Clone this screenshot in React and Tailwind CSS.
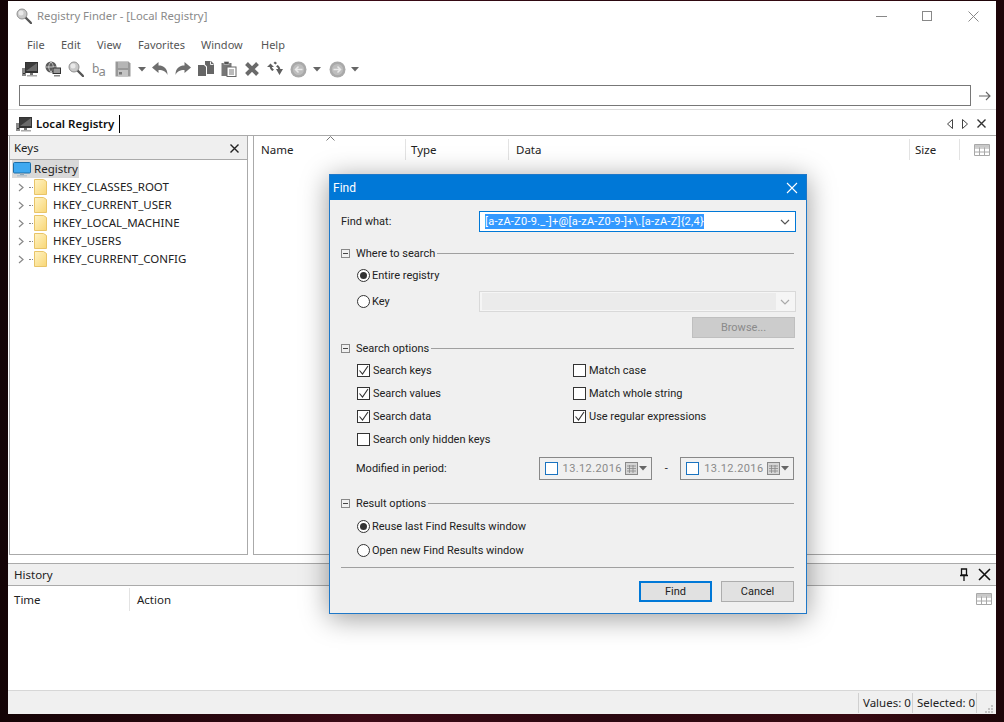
import React from 'react';

const Caret = () => (
  <svg width="8" height="5" viewBox="0 0 8 5"><path d="M0 0h8L4 4.500z" fill="#666" /></svg>
);

const Computer = ({ size = 16 }) => (
  <svg width={size} height={size} viewBox="0 0 16 16">
    <rect x="0" y="7" width="4" height="8" fill="#8a8a8a" />
    <rect x="1" y="12" width="2" height="1" fill="#333" />
    <rect x="3" y="1" width="13" height="11" fill="#333" />
    <rect x="4" y="2" width="11" height="8" fill="#6a6a6a" />
    <path d="M4 2h11L4 10z" fill="#3c3c3c" />
    <rect x="8" y="12" width="3" height="2" fill="#777" />
    <rect x="5" y="14" width="10" height="1.500" fill="#aaa" />
  </svg>
);

const GlobePc = () => (
  <svg width="16" height="16" viewBox="0 0 16 16">
    <circle cx="6" cy="6" r="5.500" fill="#5a5a5a" />
    <path d="M1 6h10M6 1c-3 3-3 7 0 10M6 1c3 3 3 7 0 10" stroke="#ddd" strokeWidth="0.800" fill="none" />
    <rect x="7.500" y="6.500" width="8.500" height="6.500" fill="#333" />
    <rect x="8.500" y="7.500" width="6.500" height="4.500" fill="#9a9a9a" />
    <rect x="9" y="14" width="6" height="1.500" fill="#888" />
  </svg>
);

const Magnifier = ({ size = 16 }) => (
  <svg width={size} height={size} viewBox="0 0 16 16">
    <path d="M9 9l6 6" stroke="#555" strokeWidth="2.400" strokeLinecap="round" />
    <circle cx="6" cy="6" r="5" fill="#c9c9c9" stroke="#8f8f8f" />
    <circle cx="5" cy="5" r="2.500" fill="#e9e9e9" />
  </svg>
);

const Floppy = () => (
  <svg width="16" height="16" viewBox="0 0 16 16">
    <path d="M0.500 0.500h13l2 2v13h-15z" fill="#999" />
    <rect x="3" y="1" width="10" height="6" fill="#b5b5b5" />
    <rect x="3" y="9" width="10" height="6.500" fill="#c4c4c4" />
    <rect x="4" y="11" width="3" height="2.500" fill="#777" />
  </svg>
);

const Undo = ({ flip }) => (
  <svg width="16" height="14" viewBox="0 0 16 14" className={flip ? '-scale-x-100' : ''}>
    <path d="M0 5.500L6.500 0v3.500c5 0 9 2.500 9 9.500-1.500-3.500-4-5-9-5V11z" fill="#6f6f6f" />
  </svg>
);

const CopyIcon = () => (
  <svg width="16" height="16" viewBox="0 0 16 16">
    <path d="M0 4h6l2 2v9H0z" fill="#666" />
    <path d="M7 0h6l3 3v10H9V5.500L7 3.500z" fill="#666" />
    <path d="M12.500 0.500v3h3" fill="none" stroke="#eee" />
  </svg>
);

const PasteIcon = () => (
  <svg width="16" height="16" viewBox="0 0 16 16">
    <rect x="0.500" y="2" width="10" height="13" fill="#777" />
    <rect x="3" y="0.500" width="5" height="3" fill="#555" stroke="#eee" strokeWidth="0.500" />
    <rect x="6" y="6" width="9" height="9.500" fill="#fff" stroke="#666" />
    <path d="M8 9h5M8 11h5M8 13h5" stroke="#777" />
  </svg>
);

const BigX = () => (
  <svg width="16" height="16" viewBox="0 0 16 16">
    <path d="M2.500 2.500l11 11M13.500 2.500l-11 11" stroke="#6a6a6a" strokeWidth="4" />
  </svg>
);

const SwapArrows = () => (
  <svg width="16" height="16" viewBox="0 0 16 16">
    <path d="M0 6l3.500-3.500L7 6H4.800c.3 1 1 1.800 2.200 2.400L5.500 10C3.800 9 3 7.700 2.700 6z" fill="#5f5f5f" />
    <path d="M8 0.500l2 1.500-1.500 1.500L6.500 2z" fill="#5f5f5f" />
    <path d="M16 8l-3.500 6L9 8h2.200c-.3-1-1-1.800-2.200-2.400L10.500 4c1.700 1 2.500 2.300 2.800 4z" fill="#5f5f5f" />
  </svg>
);

const CircleArrow = ({ flip }) => (
  <svg width="17" height="17" viewBox="0 0 17 17" className={flip ? '-scale-x-100' : ''}>
    <circle cx="8.500" cy="8.500" r="8" fill="#a9a9a9" />
    <circle cx="8.500" cy="8.500" r="5.500" fill="#bdbdbd" />
    <path d="M12.500 8.500h-7M8.500 5.500l-3 3 3 3" stroke="#e9e9e9" strokeWidth="1.500" fill="none" />
  </svg>
);

const GridIcon = () => (
  <svg width="16" height="12" viewBox="0 0 16 12" className="shrink-0">
    <path d="M0.500 0.500h15v11h-15zM0.500 4h15M0.500 8h15M5.500 0.500v11M10.500 0.500v11" fill="none" stroke="#a8a8a8" />
    <rect x="1" y="1" width="14" height="2.500" fill="#c9c9c9" />
  </svg>
);

const Folder = () => (
  <svg width="13" height="16" viewBox="0 0 13 16" className="shrink-0">
    <defs>
      <linearGradient id="fld" x1="0" y1="0" x2="1" y2="1">
        <stop offset="0" stopColor="#fff3c4" />
        <stop offset="1" stopColor="#f8d675" />
      </linearGradient>
    </defs>
    <path d="M0.500 0.500h9l3 2v13h-12z" fill="url(#fld)" stroke="#e8c468" />
  </svg>
);

const PcBlue = () => (
  <svg width="18" height="15" viewBox="0 0 18 15" className="shrink-0">
    <rect x="0.500" y="0.500" width="17" height="10.500" rx="1" fill="#3fa9f0" stroke="#1c6ea8" />
    <rect x="7" y="11" width="4" height="2" fill="#8fa7b8" />
    <rect x="4" y="13" width="10" height="1.500" fill="#b6c4ce" />
  </svg>
);

const Chevron = ({ color = '#555' }) => (
  <svg width="10" height="6" viewBox="0 0 10 6"><path d="M1 1l4 4 4-4" fill="none" stroke={color} strokeWidth="1.200" /></svg>
);

const Check = () => (
  <svg width="11" height="11" viewBox="0 0 11 11"><path d="M1.500 5.500l3 3.500 5.500-8" fill="none" stroke="#333" strokeWidth="1.100" /></svg>
);

const CheckBox = ({ checked, label }) => (
  <div className="flex items-center gap-[3px] h-[13px]">
    <span className="w-[13px] h-[13px] border border-[#333] bg-white flex items-center justify-center shrink-0">
      {checked && <Check />}
    </span>
    <span>{label}</span>
  </div>
);

const Radio = ({ checked, label }) => (
  <div className="flex items-center gap-[2px] h-[13px]">
    <span className="w-[13px] h-[13px] rounded-full border border-[#333] bg-white flex items-center justify-center shrink-0">
      {checked && <span className="w-[7px] h-[7px] rounded-full bg-[#333]" />}
    </span>
    <span>{label}</span>
  </div>
);

const GroupHeader = ({ label }) => (
  <div className="flex items-center h-[14px]">
    <span className="w-[9px] h-[9px] border border-[#888] flex items-center justify-center shrink-0">
      <span className="w-[5px] h-px bg-[#444]" />
    </span>
    <span className="ml-[6px] mr-[2px] whitespace-nowrap">{label}</span>
    <span className="flex-1 h-px bg-[#a0a0a0]" />
  </div>
);

const DateBox = () => (
  <div className="w-[114px] h-[23px] border border-[#888] flex items-center pl-[5px] pr-[4px]">
    <span className="w-[13px] h-[13px] border border-[#1a73c0] bg-white shrink-0" />
    <span className="ml-[5px] text-[#8a8a8a] tracking-[0.4px]">13.12.2016</span>
    <svg width="13" height="13" viewBox="0 0 13 13" className="ml-auto">
      <rect x="0.500" y="0.500" width="12" height="12" fill="#d5d5d5" stroke="#888" />
      <path d="M2 4h9M2 6.500h9M2 9h9M4.500 3v8M8 3v8" stroke="#888" strokeWidth="0.800" />
    </svg>
    <span className="ml-[1px]"><Caret /></span>
  </div>
);

const treeRoots = [
  'HKEY_CLASSES_ROOT',
  'HKEY_CURRENT_USER',
  'HKEY_LOCAL_MACHINE',
  'HKEY_USERS',
  'HKEY_CURRENT_CONFIG',
];

const menus = [
  { name: 'File', w: 'w-[34px]' },
  { name: 'Edit', w: 'w-[36px]' },
  { name: 'View', w: 'w-[41px]' },
  { name: 'Favorites', w: 'w-[63px]' },
  { name: 'Window', w: 'w-[60px]' },
  { name: 'Help', w: 'w-[30px]' },
];

const FindDialog = () => (
  <div className="absolute left-[329px] top-[174px] w-[478px] h-[440px] bg-[#f0f0f0] border border-[#1f78c8] shadow-[0_4px_26px_rgba(0,0,0,0.4)] flex flex-col text-[#222] font-['Roboto',sans-serif] text-[11px]">
    <div className="h-[25px] bg-[#0078d7] text-white flex items-center justify-between pl-[3px] pr-[8px] text-[12px] shrink-0">
      <span>Find</span>
      <svg width="12" height="12" viewBox="0 0 12 12"><path d="M1 1l10 10M11 1L1 11" stroke="#fff" strokeWidth="1.100" /></svg>
    </div>

    <div className="flex-1 pl-[11px] pr-[12px] pt-[11px] flex flex-col">
      <div className="flex items-center h-[21px]">
        <span className="w-[138px]">Find what:</span>
        <div className="w-[317px] h-[21px] -mr-[2px] bg-white border border-[#0078d7] flex items-center pl-[5px] pr-[5px]">
          <span className="bg-[#3399ff] text-white whitespace-nowrap leading-[15px] tracking-[0.25px]">[a-zA-Z0-9._-]+@[a-zA-Z0-9-]+\.[a-zA-Z]{'{2,4}'}</span>
          <span className="ml-auto"><Chevron /></span>
        </div>
      </div>

      <div className="mt-[14px]"><GroupHeader label="Where to search" /></div>
      <div className="mt-[9px] ml-[16px]"><Radio checked label="Entire registry" /></div>
      <div className="mt-[9px] ml-[16px] flex items-center h-[21px]">
        <span className="w-[122px]"><Radio label="Key" /></span>
        <div className="w-[317px] h-[21px] -mr-[2px] bg-[#f5f5f5] border border-[#d9d9d9] flex items-center pl-[2px]">
          <span className="w-[294px] h-[17px] bg-[#ebebeb]" />
          <span className="ml-[4px]"><Chevron color="#aaa" /></span>
        </div>
      </div>
      <div className="mt-[5px] flex justify-end h-[22px]">
        <div className="w-[103px] h-[21px] -mr-[1px] bg-[#cccccc] border border-[#bfbfbf] flex items-center justify-center text-[#8a8a8a]">Browse...</div>
      </div>

      <div className="mt-[2px]"><GroupHeader label="Search options" /></div>
      <div className="mt-[9px] ml-[16px] grid grid-cols-[216px_1fr] gap-y-[10px]">
        <CheckBox checked label="Search keys" />
        <CheckBox label="Match case" />
        <CheckBox checked label="Search values" />
        <CheckBox label="Match whole string" />
        <CheckBox checked label="Search data" />
        <CheckBox checked label="Use regular expressions" />
        <CheckBox label="Search only hidden keys" />
      </div>
      <div className="mt-[11px] ml-[15px] flex items-center h-[23px]">
        <span className="w-[183px]">Modified in period:</span>
        <DateBox />
        <span className="w-[28px] text-center">-</span>
        <DateBox />
      </div>

      <div className="mt-[16px]"><GroupHeader label="Result options" /></div>
      <div className="mt-[10px] ml-[16px]"><Radio checked label="Reuse last Find Results window" /></div>
      <div className="mt-[11px] ml-[16px]"><Radio label="Open new Find Results window" /></div>
      <div className="mt-[10px] h-px bg-[#a0a0a0]" />
      <div className="mt-[13px] flex justify-end gap-[9px]">
        <button className="w-[73px] h-[21px] bg-[#e1e1e1] border-2 border-[#0078d7]">Find</button>
        <button className="w-[73px] h-[21px] bg-[#e1e1e1] border border-[#adadad]">Cancel</button>
      </div>
    </div>
  </div>
);

export default function App() {
  return (
    <div className="relative w-[1004px] h-[722px] overflow-hidden bg-[linear-gradient(90deg,#140406,#2c0810_25%,#3c0a16_36%,#2a0810_60%,#380a12_85%,#1c0508)] pt-px pl-[8px] font-['Noto_Sans','Open_Sans',sans-serif] text-[11.5px] leading-none">
      <div className="w-[988px] h-[713px] bg-white flex flex-col text-[#333]">
        {/* title bar */}
        <div className="h-[30px] flex items-center pl-[8px] shrink-0">
          <Magnifier />
          <span className="ml-[5px] text-[#8a8a8a] text-[11.3px]">Registry Finder - [Local Registry]</span>
          <div className="ml-auto flex items-center">
            <span className="w-[11px] h-px bg-[#888] mr-[35px]" />
            <span className="w-[10px] h-[10px] border border-[#888] mr-[36px]" />
            <svg width="11" height="11" viewBox="0 0 11 11" className="mr-[17px]"><path d="M0.500 0.500l10 10M10.500 0.500l-10 10" stroke="#888" /></svg>
          </div>
        </div>

        {/* menu + toolbar */}
        <div className="h-[24px] flex items-center pl-[19px] mt-[1px] shrink-0 text-[#555] text-[11px]">
          {menus.map((m) => (
            <span key={m.name} className={m.w}>{m.name}</span>
          ))}
        </div>
        <div className="h-[26px] flex items-center pl-[14px] shrink-0">
          <span className="w-[23px]"><Computer /></span>
          <span className="w-[23px]"><GlobePc /></span>
          <span className="w-[24px]"><Magnifier /></span>
          <span className="w-[23px] text-[#888] text-[12px] tracking-[-1px]">b<sub className="text-[13px]">a</sub></span>
          <span className="w-[23px]"><Floppy /></span>
          <span className="w-[14px]"><Caret /></span>
          <span className="w-[23px]"><Undo /></span>
          <span className="w-[23px]"><Undo flip /></span>
          <span className="w-[23px]"><CopyIcon /></span>
          <span className="w-[23px]"><PasteIcon /></span>
          <span className="w-[23px]"><BigX /></span>
          <span className="w-[23px]"><SwapArrows /></span>
          <span className="w-[23px]"><CircleArrow /></span>
          <span className="w-[16px]"><Caret /></span>
          <span className="w-[22px]"><CircleArrow flip /></span>
          <span className="w-[14px]"><Caret /></span>
        </div>
        <div className="h-[21px] flex items-center mt-[3px] pl-[11px] shrink-0">
          <div className="w-[952px] h-[21px] border border-[#777] bg-white" />
          <svg width="12" height="10" viewBox="0 0 12 10" className="ml-[8px]"><path d="M0 5h11M7 1l4 4-4 4" fill="none" stroke="#666" strokeWidth="1.100" /></svg>
        </div>

        {/* tabs */}
        <div className="h-[26px] mt-[3px] border-t border-[#ddd] flex items-center pl-[8px] pr-[10px] pt-[2px] shrink-0">
          <Computer />
          <span className="ml-[4px] font-semibold text-[#111] whitespace-nowrap">Local Registry</span>
          <span className="ml-[5px] w-px h-[18px] bg-black" />
          <div className="ml-auto flex items-center gap-[9px]">
            <svg width="6" height="10" viewBox="0 0 6 10"><path d="M5.500 0.500v9l-5-4.500z" fill="none" stroke="#444" /></svg>
            <svg width="6" height="10" viewBox="0 0 6 10"><path d="M0.500 0.500v9l5-4.500z" fill="none" stroke="#444" /></svg>
            <svg width="9" height="9" viewBox="0 0 9 9"><path d="M0.500 0.500l8 8M8.500 0.500l-8 8" stroke="#333" strokeWidth="1.400" /></svg>
          </div>
        </div>

        {/* keys + values */}
        <div className="h-[420px] flex shrink-0 border-t border-[#aaa]">
          <div className="w-[239px] ml-px border-l border-r border-b border-[#aaa] flex flex-col">
            <div className="h-[24px] bg-[#efefef] border-b border-[#aaa] flex items-center justify-between pl-[4px] pr-[8px] pt-[1px] text-[#222] shrink-0">
              <span>Keys</span>
              <svg width="9" height="9" viewBox="0 0 9 9"><path d="M0.500 0.500l8 8M8.500 0.500l-8 8" stroke="#222" strokeWidth="1.400" /></svg>
            </div>
            <div className="text-[#222]">
              <div className="flex items-center h-[18px] ml-[2px] w-[67px] bg-[#d9d9d9] pl-[1px]">
                <PcBlue />
                <span className="ml-[3px]">Registry</span>
              </div>
              {treeRoots.map((k) => (
                <div key={k} className="flex items-center h-[18px]">
                  <svg width="6" height="9" viewBox="0 0 6 9" className="ml-[8px]"><path d="M1 1l4 3.500-4 3.500" fill="none" stroke="#888" strokeWidth="1.200" /></svg>
                  <span className="ml-[5px] w-[4px] h-px border-t border-dotted border-[#888]" />
                  <span className="ml-[1px]"><Folder /></span>
                  <span className="ml-[6px]">{k}</span>
                </div>
              ))}
            </div>
          </div>

          <div className="w-[743px] ml-[5px] border-l border-b border-[#aaa] text-[#222]">
            <div className="relative h-[24px] flex items-center pt-[3px]">
              <span className="w-[151px] pl-[7px]">Name</span>
              <span className="w-[103px] pl-[5px] h-[21px] flex items-center border-l border-[#e3e3e3]">Type</span>
              <span className="w-[401px] pl-[7px] h-[21px] flex items-center border-l border-[#e3e3e3]">Data</span>
              <span className="w-[50px] pl-[5px] h-[21px] flex items-center border-l border-[#e3e3e3]">Size</span>
              <span className="pl-[14px] h-[21px] flex items-center border-l border-[#e3e3e3]"><GridIcon /></span>
              <svg width="9" height="5" viewBox="0 0 9 5" className="absolute left-[72px] top-0"><path d="M0.500 4.500l4-4 4 4" fill="none" stroke="#777" /></svg>
            </div>
          </div>
        </div>

        {/* history */}
        <div className="h-[8px] shrink-0" />
        <div className="h-[23px] bg-[#efefef] border-t border-b border-[#aaa] flex items-center pl-[6px] pr-[5px] text-[#222] shrink-0">
          <span>History</span>
          <svg width="8" height="13" viewBox="0 0 8 13" className="ml-auto mr-[10px]"><path d="M1.500 1h5v6h-5zM0 7.500h8M4 8v5" fill="none" stroke="#111" strokeWidth="1.300" /></svg>
          <svg width="13" height="13" viewBox="0 0 13 13"><path d="M1 1l11 11M12 1L1 12" stroke="#111" strokeWidth="1.600" /></svg>
        </div>
        <div className="flex-1 flex items-start text-[#222] pr-[4px] pt-[2px]">
          <span className="w-[122px] h-[23px] pl-[6px] flex items-center border-r border-[#e3e3e3]">Time</span>
          <span className="pl-[7px] h-[23px] flex items-center">Action</span>
          <span className="ml-auto mt-[5px]"><GridIcon /></span>
        </div>

        {/* status bar */}
        <div className="h-[24px] bg-[#f0f0f0] border-t border-[#d7d7d7] flex items-center justify-end text-[#222] shrink-0">
          <span className="h-[20px] w-[54px] pl-[4px] flex items-center border-l border-[#d0d0d0] whitespace-nowrap">Values: 0</span>
          <span className="h-[20px] w-[64px] pl-[4px] flex items-center border-l border-[#d0d0d0] whitespace-nowrap">Selected: 0</span>
          <span className="h-[20px] w-[20px] border-l border-[#d0d0d0] flex items-end justify-end pr-[3px]">
            <svg width="8" height="8" viewBox="0 0 8 8"><path d="M6 0h2v2H6zM3 3h2v2H3zM6 3h2v2H6zM0 6h2v2H0zM3 6h2v2H3zM6 6h2v2H6z" fill="#c4c4c4" /></svg>
          </span>
        </div>
      </div>

      <FindDialog />
    </div>
  );
}
